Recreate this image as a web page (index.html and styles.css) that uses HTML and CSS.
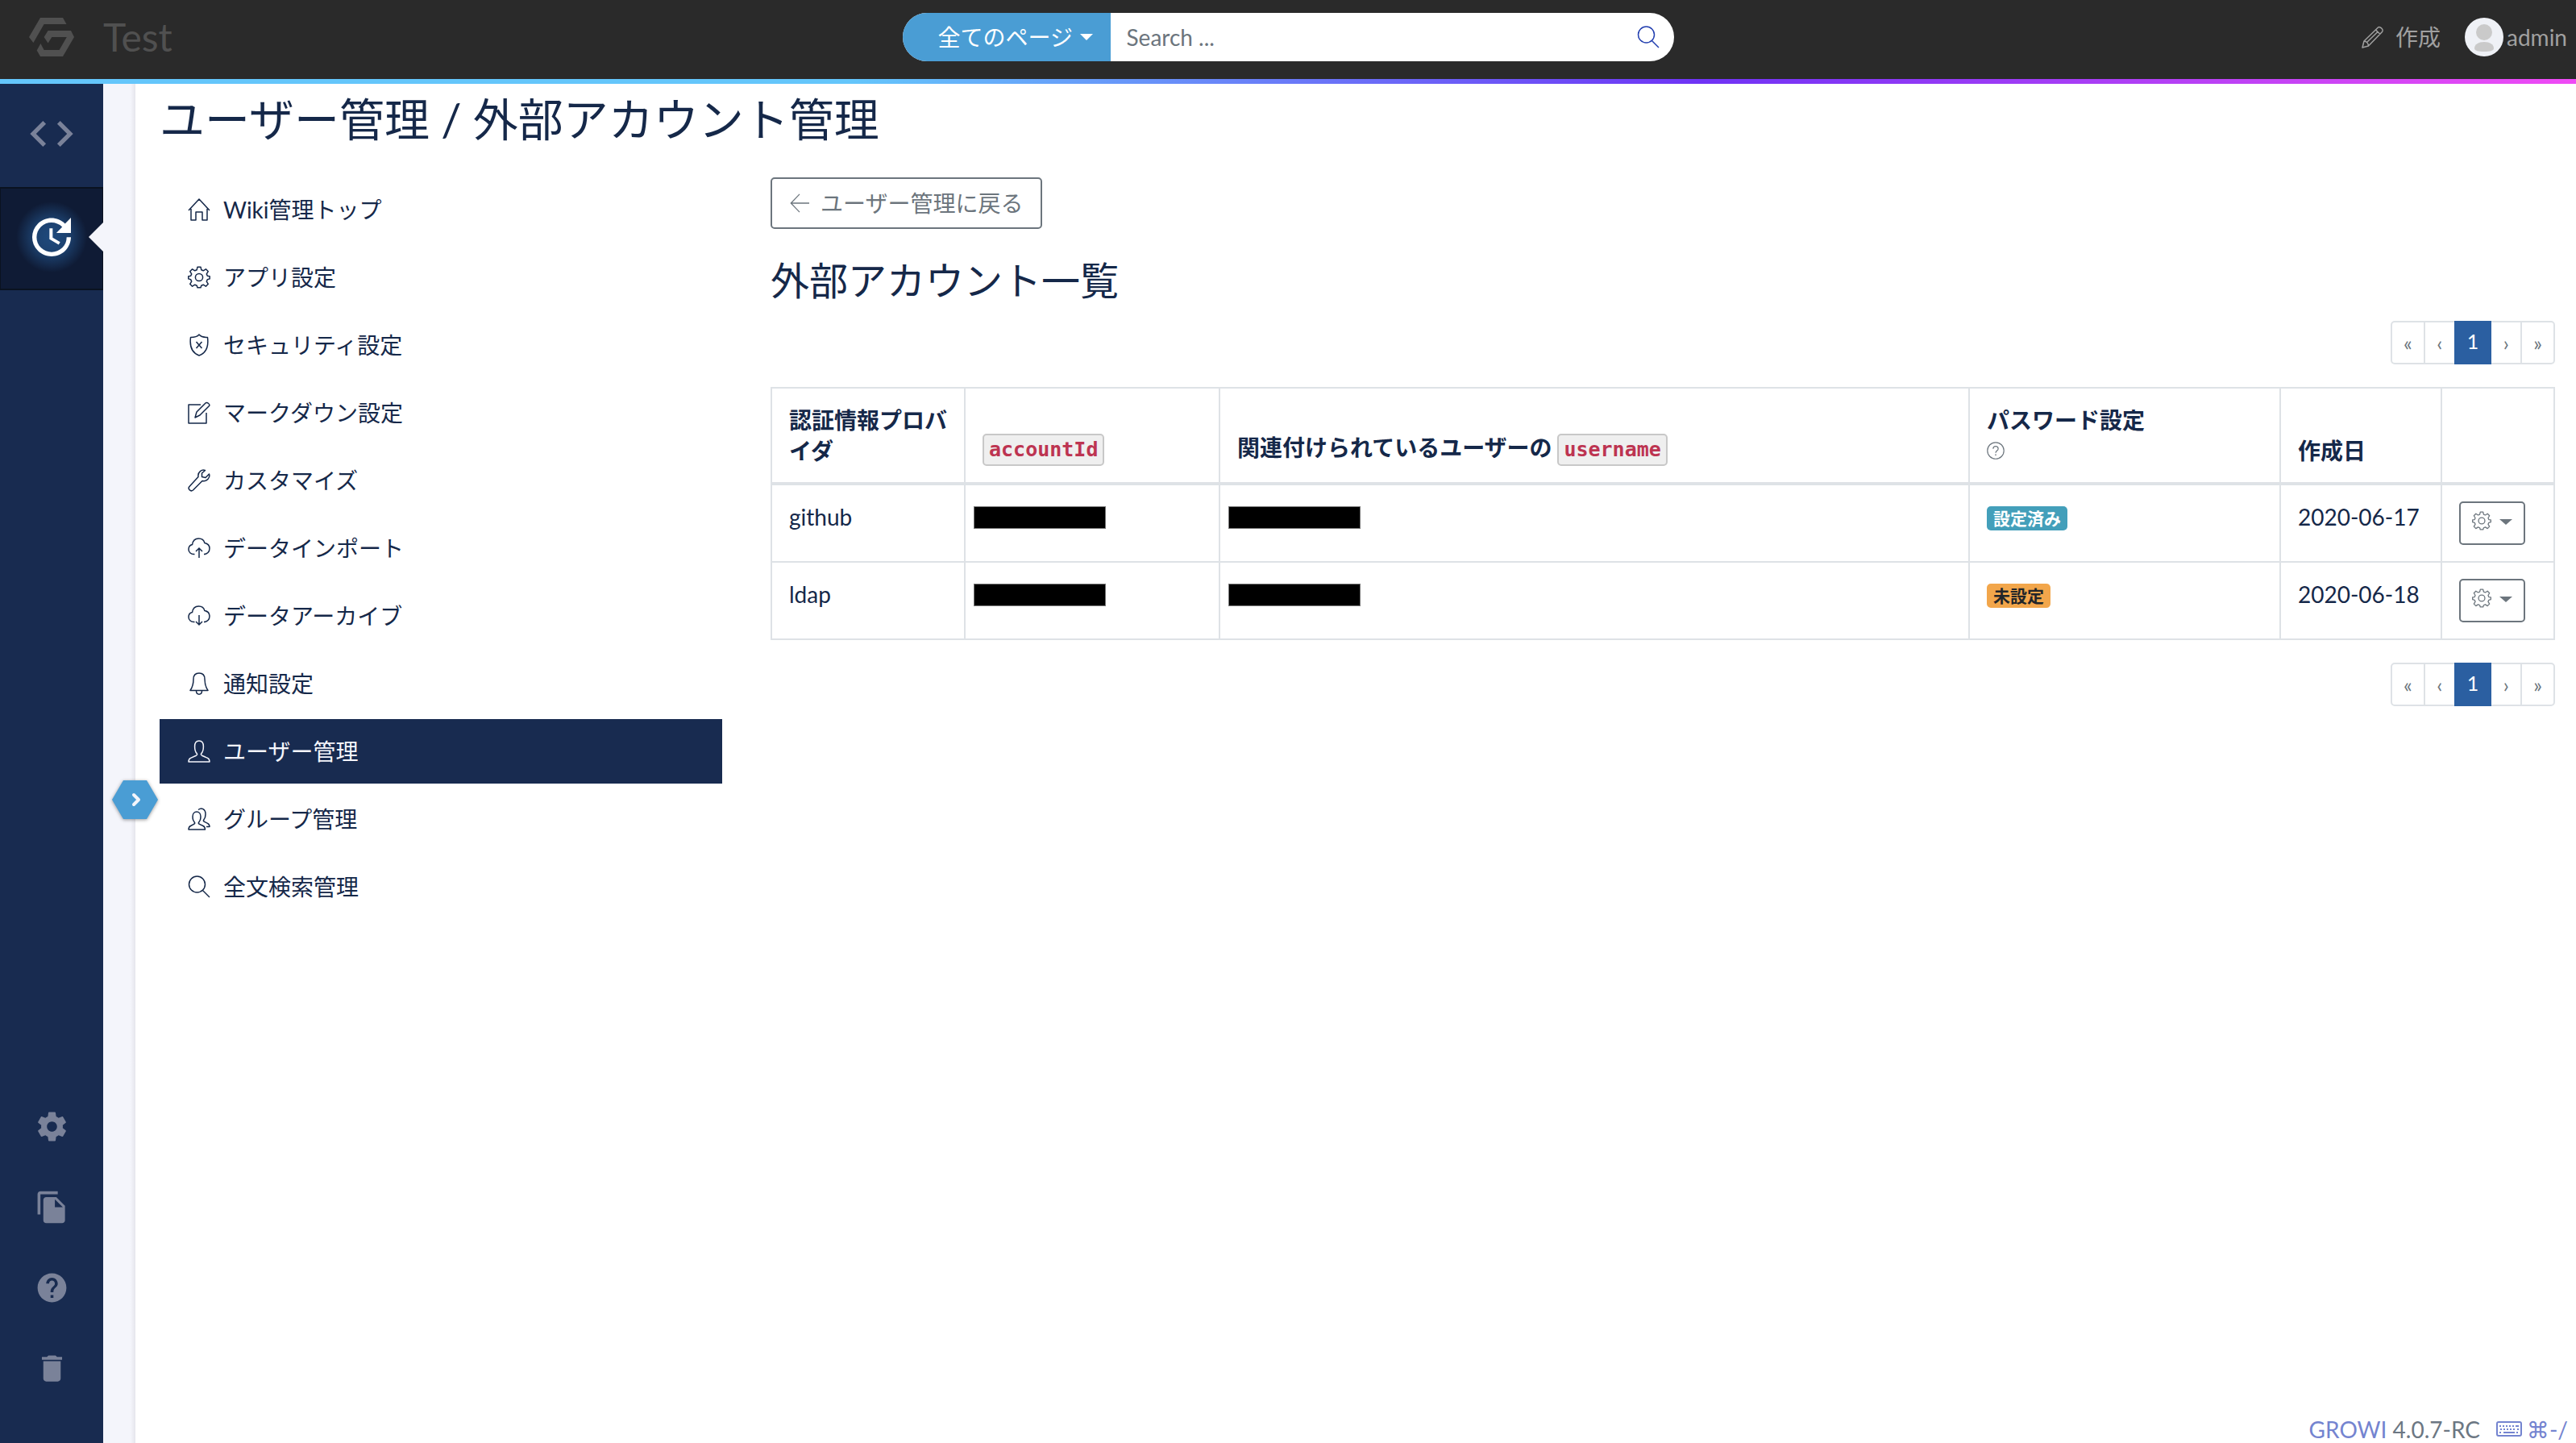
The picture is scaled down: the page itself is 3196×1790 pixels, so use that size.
FILE: index.html
```html
<!DOCTYPE html>
<html lang="ja">
<head>
<meta charset="utf-8">
<title>ユーザー管理 / 外部アカウント管理 - Test</title>
<meta name="viewport" content="width=device-width, initial-scale=1">
<link rel="stylesheet" href="styles.css">
</head>
<body>
<svg class="sprite" aria-hidden="true">
  <symbol id="i-gear" viewBox="0 0 28 28"><circle cx="14" cy="14" r="4.6"/><path d="M12 1.2h4l.8 3.6 2.4 1 3.2-2 2.9 2.9-2 3.2 1 2.4 2.9.4v3.2l-2.9.8-1 2.4 2 3.2-2.9 2.9-3.2-2-2.4 1-.8 2.600h-4l-.8-2.600-2.400-1-3.200 2-2.900-2.900 2-3.200-1-2.400-2.900-.8v-3.200l2.900-.4 1-2.400-2-3.200 2.900-2.900 3.200 2 2.400-1z" stroke-linejoin="round"/></symbol>
  <symbol id="i-user" viewBox="0 0 28 28"><path d="M14 1c3.400 0 5.400 2.800 5.400 7s-1.200 7.200-2.600 8.600c-.8 1-.3 2 .8 2.600l7 3.200c1.400.7 2.400 1.600 2.400 4.600H1c0-3 1-3.900 2.400-4.600l7-3.200c1.100-.6 1.600-1.600.8-2.600C9.800 15.200 8.600 12.200 8.600 8s2-7 5.400-7z" stroke-linejoin="round"/></symbol>
  <symbol id="i-search" viewBox="0 0 28 28"><circle cx="11.500" cy="11" r="10"/><path d="M18.500 18.500L27 27"/></symbol>
  <symbol id="i-cloud" viewBox="0 0 28 28"><path d="M8.500 21.500C4 22 1 19 1 15.500c0-3 1.800-5.400 4.600-6C6.200 5 9 2 13.500 2c3.800 0 6.600 2.200 7.400 5.600 3.600.6 6.100 3.400 6.100 7 0 4-3 6.900-7 6.900"/></symbol>
</svg>

<header class="topbar">
  <a class="brand" href="#">
    <svg class="brand-logo" viewBox="0 0 56 48" aria-hidden="true"><path d="M14 0h28l4.500 8H18.600L5.400 31 0 24zM23.600 16H52l4 8-14 24H14l-4.300-7.500 4.700-8.500 4.200 8h19l9.200-16H28.300l-4.700 7.500-5-7.500z"/></svg>
    <span>Test</span>
  </a>
  <form class="search" role="search">
    <div class="search-scope">
      <select aria-label="検索範囲"><option>全てのページ</option></select>
      <span class="caret"></span>
    </div>
    <input class="search-input" type="text" placeholder="Search ..." aria-label="Search">
    <button class="search-submit" type="button" aria-label="検索"><svg class="icon"><use href="#i-search"/></svg></button>
  </form>
  <nav class="user-nav">
    <a class="create-link" href="#">
      <svg class="icon" viewBox="0 0 28 28" aria-hidden="true"><path d="M1 27l2-8L20.500 2c2-2 7.500 3 5 5.500L8.500 25zM17.500 5l5.500 5.500M3 19c3 0 5.500 3 5.500 6M6.500 20.500L20.500 7" stroke-linejoin="round"/></svg>
      <span>作成</span>
    </a>
    <a class="account" href="#">
      <svg class="avatar" viewBox="0 0 48 48" aria-hidden="true"><circle cx="24" cy="24" r="24" fill="#eff1f6"/><circle cx="24" cy="18" r="10" fill="#cacaca"/><path d="M12 38c0-5 5-8 12-8s12 3 12 8c0 3-5 4-12 4s-12-1-12-4z" fill="#cacaca"/></svg>
      <span>admin</span>
    </a>
  </nav>
</header>

<div class="layout">
  <nav class="rail">
    <a class="rail-item" href="#" aria-label="カスタムサイドバー"><svg class="rail-icon-lg" viewBox="0 0 24 24"><path d="M9.400 16.600L4.800 12l4.600-4.600L8 6l-6 6 6 6 1.400-1.400zm5.200 0l4.600-4.600-4.600-4.600L16 6l6 6-6 6-1.400-1.400z"/></svg></a>
    <a class="rail-item is-active" href="#" aria-label="最近の更新"><svg class="rail-icon-lg" viewBox="0 0 24 24"><path d="M21 10.120h-6.780l2.740-2.820c-2.730-2.700-7.150-2.800-9.880-.1-2.730 2.710-2.730 7.080 0 9.790s7.150 2.710 9.880 0C18.320 15.650 19 14.080 19 12.100h2c0 1.980-.88 4.550-2.640 6.290-3.510 3.480-9.210 3.480-12.720 0-3.500-3.470-3.530-9.110-.02-12.580s9.140-3.470 12.650 0L21 3v7.120zM12.500 8v4.250l3.500 2.080-.72 1.210L11 13V8h1.500z"/></svg></a>
    <div class="rail-bottom">
      <a class="rail-link" href="#" aria-label="管理"><svg class="rail-icon" viewBox="0 0 24 24"><path d="M19.430 12.980c.04-.32.07-.64.07-.98s-.03-.66-.07-.98l2.110-1.650c.19-.15.24-.42.12-.64l-2-3.460c-.12-.22-.39-.3-.61-.22l-2.490 1c-.52-.4-1.080-.73-1.690-.98l-.38-2.650C14.460 2.180 14.250 2 14 2h-4c-.25 0-.46.18-.49.42l-.38 2.650c-.61.25-1.170.59-1.690.98l-2.490-1c-.23-.09-.49 0-.61.22l-2 3.460c-.13.22-.07.49.12.64l2.110 1.650c-.04.32-.07.65-.07.98s.03.66.07.98l-2.110 1.650c-.19.15-.24.42-.12.64l2 3.460c.12.22.39.3.61.22l2.490-1c.52.4 1.080.73 1.690.98l.38 2.650c.03.24.24.42.49.42h4c.25 0 .46-.18.49-.42l.38-2.650c.61-.25 1.170-.59 1.690-.98l2.490 1c.23.09.49 0 .61-.22l2-3.460c.12-.22.07-.49-.12-.64l-2.110-1.650zM12 15.500c-1.930 0-3.500-1.570-3.500-3.500s1.570-3.500 3.500-3.500 3.500 1.570 3.500 3.500-1.570 3.500-3.500 3.500z"/></svg></a>
      <a class="rail-link" href="#" aria-label="下書き"><svg class="rail-icon" viewBox="0 0 24 24"><path d="M16 1H4c-1.100 0-2 .9-2 2v14h2V3h12V1zm-1 4l6 6v10c0 1.100-.9 2-2 2H7.990C6.890 23 6 22.100 6 21l.01-14c0-1.100.89-2 1.990-2h7zm-1 7h5.500L14 6.500V12z"/></svg></a>
      <a class="rail-link" href="#" aria-label="ヘルプ"><svg class="rail-icon" viewBox="0 0 24 24"><path d="M12 2C6.480 2 2 6.480 2 12s4.480 10 10 10 10-4.480 10-10S17.520 2 12 2zm1 17h-2v-2h2v2zm2.070-7.750l-.9.920C13.450 12.900 13 13.500 13 15h-2v-.5c0-1.100.45-2.100 1.170-2.830l1.240-1.260c.37-.36.59-.86.59-1.410 0-1.100-.9-2-2-2s-2 .9-2 2H8c0-2.210 1.790-4 4-4s4 1.790 4 4c0 .88-.36 1.680-.93 2.250z"/></svg></a>
      <a class="rail-link" href="#" aria-label="ゴミ箱"><svg class="rail-icon" viewBox="0 0 24 24"><path d="M6 19c0 1.100.9 2 2 2h8c1.100 0 2-.9 2-2V7H6v12zM19 4h-3.500l-1-1h-5l-1 1H5v2h14V4z"/></svg></a>
    </div>
  </nav>
  <div class="drawer">
    <button class="drawer-toggle" type="button" aria-label="サイドバーを開く">
      <svg viewBox="0 0 57 48"><path d="M14 0h29l14 24-14 24H14L0 24z" fill="#4a9dd4"/><path d="M27 18l6 6-6 6" fill="none" stroke="#f4f5fb" stroke-width="4" stroke-linecap="round" stroke-linejoin="round"/></svg>
    </button>
  </div>

  <div class="page">
    <h1 class="page-title">ユーザー管理 / 外部アカウント管理</h1>
    <div class="columns">
      <nav class="admin-nav">
        <a class="admin-link" href="#"><svg class="icon" viewBox="0 0 28 28"><path d="M1 15L14 1l13 14M4 13v14h6V17h8v10h6V13" stroke-linejoin="round"/></svg>Wiki管理トップ</a>
        <a class="admin-link" href="#"><svg class="icon"><use href="#i-gear"/></svg>アプリ設定</a>
        <a class="admin-link" href="#"><svg class="icon" viewBox="0 0 28 28"><path d="M14 1c2 2.500 6 3.500 10.500 3.500C26 16 22 24 14 27 6 24 2 16 3.500 4.500 8 4.500 12 3.500 14 1zM10.500 10l7 8M17.500 10l-7 8" stroke-linejoin="round"/></svg>セキュリティ設定</a>
        <a class="admin-link" href="#"><svg class="icon" viewBox="0 0 28 28"><path d="M16 4H1v23h22V14M9 20l2-7L22 2c1.500-2 6 1.500 4.500 3.500L15 17z" stroke-linejoin="round"/></svg>マークダウン設定</a>
        <a class="admin-link" href="#"><svg class="icon" viewBox="0 0 28 28"><path d="M21.500 1.500c-4-1.500-9.500 2-8.500 8L2 21.500C-.5 24.500 3.500 28.500 6.500 26L18 14.500c6 1 10-4 8.500-8.500L22 10.500l-4.500-1V5z" stroke-linejoin="round"/></svg>カスタマイズ</a>
        <a class="admin-link" href="#"><svg class="icon" viewBox="0 0 28 28"><use href="#i-cloud"/><path d="M14 26V14M10 18l4-4 4 4"/></svg>データインポート</a>
        <a class="admin-link" href="#"><svg class="icon" viewBox="0 0 28 28"><use href="#i-cloud"/><path d="M14 13v12M10 21l4 4 4-4"/></svg>データアーカイブ</a>
        <a class="admin-link" href="#"><svg class="icon" viewBox="0 0 28 28"><path d="M14 1c4.500 0 7 3 7 7.500 0 7 1.500 10.500 4 14H3c2.500-3.500 4-7 4-14C7 4 9.500 1 14 1zM10.500 23c0 5.500 7 5.500 7 0" stroke-linejoin="round"/></svg>通知設定</a>
        <a class="admin-link is-active" href="#" aria-current="page"><svg class="icon"><use href="#i-user"/></svg>ユーザー管理</a>
        <a class="admin-link" href="#"><svg class="icon" viewBox="0 0 28 28"><path d="M11 5c3 0 5 2.500 5 6s-1 5.500-2.300 7c-.8 1-.2 1.800.8 2.300l4.500 2.200c1.600.8 2.500 1.500 2.500 4.500H1c0-3 .8-3.700 2.500-4.500l4-2.200c1-.5 1.600-1.300.8-2.300C7 16.500 6 14.500 6 11s2-6 5-6zM13 2.500c4-3 9-1 9 5.500 0 3-1 5.500-2.200 7-.8 1-.2 1.800.8 2.300l4 2c1.700.9 2.400 1.700 2.400 4.200h-4" stroke-linejoin="round"/></svg>グループ管理</a>
        <a class="admin-link" href="#"><svg class="icon"><use href="#i-search"/></svg>全文検索管理</a>
      </nav>

      <main class="content">
        <a class="back-button" href="#"><svg class="icon icon-sm" viewBox="0 0 28 28"><path d="M28 14H2M14 1L1.500 14 14 27"/></svg>ユーザー管理に戻る</a>
        <h2 class="section-title">外部アカウント一覧</h2>

        <ul class="pagination">
          <li><a href="#" aria-label="最初">«</a></li>
          <li><a href="#" aria-label="前へ">‹</a></li>
          <li><a class="is-current" href="#">1</a></li>
          <li><a href="#" aria-label="次へ">›</a></li>
          <li><a href="#" aria-label="最後">»</a></li>
        </ul>

        <table class="accounts">
          <colgroup><col class="col-provider"><col class="col-account"><col><col class="col-password"><col class="col-date"><col class="col-menu"></colgroup>
          <thead>
            <tr>
              <th scope="col">認証情報プロバイダ</th>
              <th scope="col"><code>accountId</code></th>
              <th scope="col">関連付けられているユーザーの <code>username</code></th>
              <th scope="col">パスワード設定<a class="hint" href="#" aria-label="説明"><svg class="icon" viewBox="0 0 28 28"><circle cx="14" cy="14" r="13"/><path d="M10 11c0-5 8-5 8 0 0 3-4 3-4 6.500M14 19.500v2.500"/></svg></a></th>
              <th scope="col">作成日</th>
              <td></td>
            </tr>
          </thead>
          <tbody>
            <tr>
              <td>github</td>
              <td class="masked"><span class="mask"></span></td>
              <td class="masked"><span class="mask"></span></td>
              <td><span class="badge badge-info">設定済み</span></td>
              <td>2020-06-17</td>
              <td><button class="menu-button" type="button" aria-haspopup="true" aria-label="操作"><svg class="icon icon-sm"><use href="#i-gear"/></svg><span class="caret"></span></button></td>
            </tr>
            <tr>
              <td>ldap</td>
              <td class="masked"><span class="mask"></span></td>
              <td class="masked"><span class="mask"></span></td>
              <td><span class="badge badge-warning">未設定</span></td>
              <td>2020-06-18</td>
              <td><button class="menu-button" type="button" aria-haspopup="true" aria-label="操作"><svg class="icon icon-sm"><use href="#i-gear"/></svg><span class="caret"></span></button></td>
            </tr>
          </tbody>
        </table>

        <ul class="pagination">
          <li><a href="#" aria-label="最初">«</a></li>
          <li><a href="#" aria-label="前へ">‹</a></li>
          <li><a class="is-current" href="#">1</a></li>
          <li><a href="#" aria-label="次へ">›</a></li>
          <li><a href="#" aria-label="最後">»</a></li>
        </ul>
      </main>
    </div>

    <footer class="footer">
      <span><a href="#">GROWI</a> 4.0.7-RC</span>
      <a class="shortcut" href="#"><svg class="keyboard" viewBox="0 0 32 20" aria-hidden="true"><rect x="1" y="1" width="30" height="17" rx="2"/><path d="M4 6h22M5 10h20M27 5v6M4 14h3M25 14h3" stroke-dasharray="2 2"/><path d="M9 14h14"/></svg><span>⌘-/</span></a>
    </footer>
  </div>
</div>
</body>
</html>
```
FILE: styles.css
```css
*, *::before, *::after { box-sizing: border-box; }

body {
  margin: 0;
  min-height: 100vh;
  display: flex;
  flex-direction: column;
  background: #fff;
  color: #152849;
  font: 28px/38px Lato, "Noto Sans CJK JP", sans-serif;
}

a { color: inherit; text-decoration: none; }
button, input, select { font: inherit; color: inherit; border: 0; margin: 0; }

.sprite { display: none; }

.icon {
  flex: none;
  display: block;
  width: 28px;
  height: 28px;
  fill: none;
  stroke: currentColor;
  stroke-width: 1.5;
}
.icon-sm { width: 24px; height: 24px; }

.caret {
  flex: none;
  border: 8px solid transparent;
  border-top-color: currentColor;
  border-bottom: 0;
}

/* top bar */
.topbar {
  display: grid;
  grid-template-columns: 1fr 957px 1fr;
  align-items: center;
  height: 104px;
  padding: 0 11px 12px;
  background:
    linear-gradient(to right, #64c6fb 0, #64c6fb 33%, #6f33f5 66%, #f04bf5 100%) bottom / 100% 6px no-repeat,
    #2a2a2a;
}

.brand {
  display: flex;
  align-items: center;
  gap: 36px;
  padding-left: 25px;
  color: #505050;
  font-size: 48px;
  line-height: 56px;
}
.brand-logo { width: 56px; height: 48px; fill: currentColor; }

.search {
  display: flex;
  height: 60px;
  border-radius: 30px;
  overflow: hidden;
  background: #fff;
}
.search-scope {
  display: flex;
  align-items: center;
  width: 258px;
  padding-right: 22px;
  background: #4a9dd4;
  color: #fff;
}
.search-scope select {
  flex: 1;
  height: 60px;
  padding: 0 0 0 44px;
  appearance: none;
  background: none;
}
.search-input { flex: 1; min-width: 0; padding: 0 20px; background: none; }
.search-input::placeholder { color: #6c757d; opacity: 1; }
.search-submit { padding: 0 18px; background: none; color: #2440b0; }

.user-nav {
  display: flex;
  justify-content: flex-end;
  align-items: center;
  gap: 30px;
  color: #a0a0a0;
}
.create-link { display: flex; align-items: center; gap: 14px; }
.account { display: flex; align-items: center; gap: 4px; }
.avatar { width: 48px; height: 48px; }

/* left rail */
.layout { flex: 1; display: flex; }

.rail {
  flex: none;
  display: flex;
  flex-direction: column;
  width: 128px;
  padding-bottom: 43px;
  background: #182b50;
  color: #7a8299;
}
.rail svg { display: block; fill: currentColor; }
.rail-icon-lg { width: 64px; height: 64px; }
.rail-icon { width: 43px; height: 43px; }
.rail-item, .rail-link { display: flex; align-items: center; justify-content: center; }
.rail-item { position: relative; height: 128px; padding-bottom: 4px; }
.rail-link { height: 100px; }
.rail-bottom { margin-top: auto; }
.rail-item.is-active {
  border: 1px solid #0a1220;
  border-width: 2px 1px;
  color: #fff;
  background: radial-gradient(circle at 50% 60px, #1f4a7d 0, #1d4270 20px, #0f1b35 44px);
}
.rail-item.is-active::after {
  content: "";
  position: absolute;
  right: -1px;
  border: 18px solid transparent;
  border-right-color: #f4f5fb;
  border-left: 0;
}

.drawer {
  position: relative;
  flex: none;
  width: 40px;
  background: linear-gradient(to left, #e5e5ec, #f4f5fb 6px);
}
.drawer-toggle {
  position: absolute;
  top: 864px;
  left: 11px;
  width: 57px;
  height: 48px;
  padding: 0;
  background: none;
  filter: drop-shadow(0 1px 2px rgba(0, 0, 0, .4));
}
.drawer-toggle svg { display: block; width: 57px; height: 48px; }

/* page */
.page {
  flex: 1;
  min-width: 0;
  display: flex;
  flex-direction: column;
  padding: 10px 26px 0 30px;
}
.page-title { margin: 0 0 38px; font-size: 56px; font-weight: 400; line-height: 68px; }

.columns { display: grid; grid-template-columns: repeat(12, 1fr); column-gap: 60px; }
.admin-nav { grid-column: span 3; display: flex; flex-direction: column; gap: 4px; }
.admin-link {
  display: flex;
  align-items: center;
  gap: 16px;
  height: 80px;
  padding: 0 35px;
}
.admin-link.is-active { background: #182b50; color: #f4f5fb; }

.content { grid-column: span 9; min-width: 0; }
.back-button {
  display: flex;
  align-items: center;
  gap: 14px;
  width: fit-content;
  height: 64px;
  padding: 0 22px;
  border: 2px solid #6c757d;
  border-radius: 5px;
  color: #6c757d;
}
.section-title { margin: 36px 0 22px; font-size: 48px; font-weight: 400; line-height: 56px; }

.pagination {
  display: flex;
  justify-content: flex-end;
  margin: 0;
  padding: 0;
  list-style: none;
  font-size: 25px;
}
.pagination a {
  display: flex;
  align-items: center;
  justify-content: center;
  min-width: 40px;
  height: 54px;
  padding: 0 14px;
  border: 2px solid #dee2e6;
  color: #6c757d;
}
.pagination li + li { margin-left: -2px; }
.pagination li:first-child a { border-radius: 5px 0 0 5px; }
.pagination li:last-child a { border-radius: 0 5px 5px 0; }
.pagination .is-current {
  position: relative;
  min-width: 46px;
  padding-bottom: 4px;
  background: #2b5fa1;
  border-color: #2b5fa1;
  color: #fff;
}

.accounts {
  width: 100%;
  margin: 28px 0;
  border-collapse: collapse;
  table-layout: fixed;
}
.col-provider { width: 240px; }
.col-account { width: 316px; }
.col-password { width: 386px; }
.col-date { width: 200px; }
.col-menu { width: 140px; }
.accounts th, .accounts td {
  padding: 20px 21px;
  border: 2px solid #dee2e6;
  text-align: left;
  vertical-align: top;
}
.accounts thead th, .accounts thead td { border-bottom-width: 4px; }
.accounts th { padding-right: 16px; vertical-align: bottom; }

code {
  display: inline-block;
  padding: 0 6px;
  border: 2px solid #c8c8c8;
  border-radius: 5px;
  background: #efefef;
  color: #bd3451;
  font: bold 25px/36px "DejaVu Sans Mono", monospace;
}
.hint { display: flex; align-items: center; height: 38px; color: #6c757d; }
.hint .icon { width: 22px; height: 22px; }

.accounts .masked { padding-left: 10px; }
.mask {
  display: block;
  width: 164px;
  height: 28px;
  margin-top: 6px;
  border: 1px solid #777;
  background: #000;
}

.badge {
  display: block;
  width: fit-content;
  margin-top: 6px;
  padding: 0 8px;
  border-radius: 5px;
  font-size: 21px;
  font-weight: 700;
  line-height: 30px;
}
.badge-info { background: #439fba; color: #fff; }
.badge-warning { background: #f2a64b; color: #212529; }

.menu-button {
  display: flex;
  align-items: flex-start;
  gap: 10px;
  height: 54px;
  padding: 10px 14px;
  border: 2px solid #6c757d;
  border-radius: 5px;
  background: none;
  color: #6c757d;
}
.menu-button .caret { margin-top: 10px; border-width: 7px 8px 0; }

.footer {
  display: flex;
  justify-content: flex-end;
  gap: 20px;
  margin: auto -16px 0 0;
  color: #6c7783;
  line-height: 34px;
}
.footer a { color: #7484d0; }
.shortcut { display: flex; align-items: center; gap: 6px; font-family: Lato, "DejaVu Sans", sans-serif; }
.keyboard { width: 32px; height: 20px; fill: none; stroke: currentColor; stroke-width: 2; }
```
